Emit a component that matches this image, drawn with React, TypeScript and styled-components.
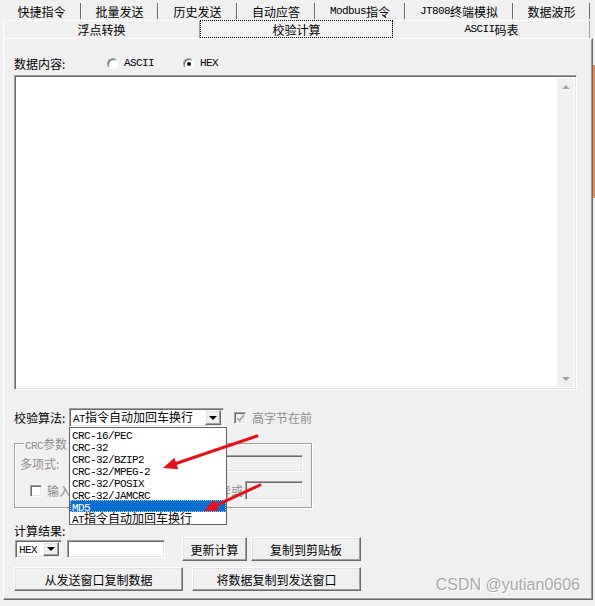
import React from 'react'
import styled, { createGlobalStyle, css } from 'styled-components'

const GlobalStyle = createGlobalStyle`
  html, body {
    margin: 0;
    padding: 0;
    background: #f0f0f0;
  }
  body {
    font-family: "Noto Sans CJK SC", "Noto Sans", sans-serif;
    font-size: 12px;
    line-height: 13px;
    color: #000;
    overflow: hidden;
  }
`

const sunken = css`
  box-sizing: border-box;
  border: 1px solid;
  border-color: #a0a0a0 #ffffff #ffffff #a0a0a0;
  box-shadow: inset 1px 1px 0 #696969, inset -1px -1px 0 #e3e3e3;
`

const raised = css`
  box-sizing: border-box;
  border: 1px solid;
  border-color: #ffffff #696969 #696969 #ffffff;
  box-shadow: inset -1px -1px 0 #a0a0a0, inset 1px 1px 0 #e3e3e3;
`

const Mono = styled.span`
  font-family: "Liberation Mono", "DejaVu Sans Mono", monospace;
  font-size: 11px;
  letter-spacing: -0.6px;
`

const Window = styled.div`
  position: relative;
  width: 595px;
  height: 606px;
  overflow: hidden;
  display: flex;
  flex-direction: column;
`

const TabRow = styled.div<{ $h: number }>`
  display: flex;
  height: ${({ $h }) => $h}px;
  padding-left: 3px;
  flex-shrink: 0;
`

const TopTab = styled.div<{ $w: number }>`
  width: ${({ $w }) => $w}px;
  height: 16px;
  margin-top: 3px;
  box-sizing: border-box;
  display: flex;
  align-items: center;
  justify-content: center;
  border-right: 1px solid #696969;
  border-left: 1px solid #ffffff;
  &:first-child {
    border-left: none;
  }
`

const SubTab = styled.div<{ $w: number; $active?: boolean }>`
  width: ${({ $w }) => $w}px;
  height: 18px;
  box-sizing: border-box;
  display: flex;
  align-items: center;
  justify-content: center;
  border-top: 1px solid #ffffff;
  border-left: 1px solid #ffffff;
  border-right: 1px solid #a0a0a0;
  ${({ $active }) =>
    $active &&
    css`
      outline: 1px dotted #000;
      outline-offset: -1px;
      background: #f3f3f3;
    `}
`

const Panel = styled.div`
  margin-left: 3px;
  width: 590px;
  height: 562px;
  box-sizing: border-box;
  border: 1px solid;
  border-color: #ffffff #696969 #696969 #ffffff;
  box-shadow: inset -1px -1px 0 #a0a0a0;
  padding: 16px 0 0 10px;
  display: flex;
  flex-direction: column;
`

const Row = styled.div<{ $h: number; $mt?: number }>`
  display: flex;
  align-items: center;
  height: ${({ $h }) => $h}px;
  margin-top: ${({ $mt = 0 }) => $mt}px;
`

const Label = styled.span<{ $w?: number; $disabled?: boolean }>`
  display: inline-block;
  white-space: nowrap;
  ${({ $w }) => $w !== undefined && `width: ${$w}px;`}
  color: ${({ $disabled }) => ($disabled ? '#8d8d8d' : '#000')};
`

const RadioItem = styled.label<{ $w: number }>`
  display: flex;
  align-items: center;
  width: ${({ $w }) => $w}px;
`

const RadioDot = styled.span<{ $checked?: boolean }>`
  position: relative;
  width: 11px;
  height: 11px;
  box-sizing: border-box;
  border-radius: 50%;
  border: 1px solid;
  border-color: #a0a0a0 #ffffff #ffffff #a0a0a0;
  box-shadow: inset 1px 1px 0 #696969;
  background: #fff;
  margin-right: 6px;
  &::after {
    content: '';
    display: ${({ $checked }) => ($checked ? 'block' : 'none')};
    position: absolute;
    left: 3px;
    top: 3px;
    width: 4px;
    height: 4px;
    border-radius: 50%;
    background: #000;
  }
`

const TextArea = styled.div`
  ${sunken};
  width: 563px;
  height: 315px;
  margin-top: 4px;
  background: #fff;
  display: flex;
  justify-content: flex-end;
  padding: 2px;
`

const ScrollBar = styled.div`
  width: 17px;
  background: #f0f0f0;
  display: flex;
  flex-direction: column;
  justify-content: space-between;
  align-items: center;
  padding: 7px 0 6px;
`

const Arrow = styled.span<{ $dir: 'up' | 'down'; $color?: string }>`
  width: 0;
  height: 0;
  border-left: 4px solid transparent;
  border-right: 4px solid transparent;
  ${({ $dir, $color = '#a3a3a3' }) =>
    $dir === 'up'
      ? `border-bottom: 4px solid ${$color};`
      : `border-top: 4px solid ${$color};`}
`

const Combo = styled.div<{ $w: number; $h: number }>`
  ${sunken};
  position: relative;
  width: ${({ $w }) => $w}px;
  height: ${({ $h }) => $h}px;
  background: #fff;
  display: flex;
  align-items: center;
  padding: 0 2px 0 3px;
`

const ComboText = styled.span`
  flex: 1;
  white-space: nowrap;
`

const DropButton = styled.span`
  ${raised};
  width: 16px;
  height: 15px;
  background: #f0f0f0;
  display: flex;
  align-items: center;
  justify-content: center;
`

const DropList = styled.ul`
  position: absolute;
  left: -1px;
  top: 18px;
  width: 158px;
  margin: 0;
  padding: 0;
  list-style: none;
  box-sizing: border-box;
  border: 1px solid #646464;
  background: #fff;
  z-index: 2;
`

const DropItem = styled.li<{ $selected?: boolean }>`
  height: 12px;
  line-height: 12px;
  padding-left: 2px;
  white-space: nowrap;
  background: ${({ $selected }) => ($selected ? '#0b6fcf' : 'transparent')};
  color: ${({ $selected }) => ($selected ? '#fff' : '#000')};
  ${({ $selected }) =>
    $selected &&
    css`
      outline: 1px dotted #9fc6f0;
      outline-offset: -1px;
    `}
`

const CheckBox = styled.span`
  ${sunken};
  width: 12px;
  height: 12px;
  background: #f0f0f0;
  display: flex;
  align-items: center;
  justify-content: center;
`

const Group = styled.fieldset`
  margin: 10px 0 0 0;
  padding: 0 8px 7px 5px;
  width: 298px;
  box-sizing: border-box;
  border: 1px solid #a0a0a0;
  box-shadow: inset 1px 1px 0 #fff, 1px 1px 0 #fff;
  min-width: 0;
`

const Legend = styled.legend`
  padding: 0 1px;
  margin-left: 4px;
  color: #8d8d8d;
  line-height: 13px;
  height: 13px;
`

const Field = styled.div<{ $w: number; $h: number; $white?: boolean }>`
  ${sunken};
  width: ${({ $w }) => $w}px;
  height: ${({ $h }) => $h}px;
  background: ${({ $white }) => ($white ? '#fff' : '#f0f0f0')};
`

const Button = styled.button<{ $w: number; $ml?: number }>`
  ${raised};
  width: ${({ $w }) => $w}px;
  height: 24px;
  margin-left: ${({ $ml = 0 }) => $ml}px;
  background: #f0f0f0;
  font-family: inherit;
  font-size: 12px;
  color: #000;
  padding: 0;
`

const Strip = styled.div`
  position: absolute;
  right: 0;
  top: 65px;
  width: 2px;
  height: 133px;
  background: #df8a5c;
`

const Marks = styled.svg`
  position: absolute;
  left: 0;
  top: 0;
  pointer-events: none;
  z-index: 5;
`

const Watermark = styled.div`
  position: absolute;
  right: 15px;
  top: 578px;
  font-family: "Liberation Sans", Arial, sans-serif;
  font-size: 16px;
  color: #a9a9a9;
  text-shadow: 1px 1px 0 #fff;
`

const topTabs: Array<{ w: number; label: React.ReactNode }> = [
  { w: 78, label: '快捷指令' },
  { w: 77, label: '批量发送' },
  { w: 79, label: '历史发送' },
  { w: 78, label: '自动应答' },
  { w: 90, label: <><Mono>Modbus</Mono>指令</> },
  { w: 108, label: <><Mono>JT808</Mono>终端模拟</> },
  { w: 77, label: '数据波形' }
]

const algos = [
  'CRC-16/PEC',
  'CRC-32',
  'CRC-32/BZIP2',
  'CRC-32/MPEG-2',
  'CRC-32/POSIX',
  'CRC-32/JAMCRC',
  'MD5'
]

const Check = () => (
  <svg width="9" height="8" viewBox="0 0 9 8">
    <path d="M1 4 L3.5 6.5 L8 1" fill="none" stroke="#a0a0a0" strokeWidth="1.6" />
  </svg>
)

const App: React.FC = () => (
  <Window>
    <GlobalStyle />
    <TabRow $h={20}>
      {topTabs.map((t, i) => (
        <TopTab key={i} $w={t.w}>
          {t.label}
        </TopTab>
      ))}
    </TabRow>
    <TabRow $h={18}>
      <SubTab $w={197}>浮点转换</SubTab>
      <SubTab $w={193} $active>
        校验计算
      </SubTab>
      <SubTab $w={197}>
        <Mono>ASCII</Mono>码表
      </SubTab>
    </TabRow>

    <Panel>
      <Row $h={16}>
        <Label $w={93}>数据内容:</Label>
        <RadioItem $w={76}>
          <RadioDot />
          <Mono>ASCII</Mono>
        </RadioItem>
        <RadioItem $w={50}>
          <RadioDot $checked />
          <Mono>HEX</Mono>
        </RadioItem>
      </Row>

      <TextArea>
        <ScrollBar>
          <Arrow $dir="up" />
          <Arrow $dir="down" />
        </ScrollBar>
      </TextArea>

      <Row $h={19} $mt={18}>
        <Label $w={55}>校验算法:</Label>
        <Combo $w={155} $h={19}>
          <ComboText>
            <Mono>AT</Mono>指令自动加回车换行
          </ComboText>
          <DropButton>
            <Arrow $dir="down" $color="#000" />
          </DropButton>
          <DropList>
            {algos.map((a) => (
              <DropItem key={a} $selected={a === 'MD5'}>
                <Mono>{a}</Mono>
              </DropItem>
            ))}
            <DropItem>
              <Mono>AT</Mono>指令自动加回车换行
            </DropItem>
          </DropList>
        </Combo>
        <span style={{ width: 10 }} />
        <CheckBox>
          <Check />
        </CheckBox>
        <Label $disabled style={{ marginLeft: 6 }}>
          高字节在前
        </Label>
      </Row>

      <Group>
        <Legend>
          <Mono>CRC</Mono>参数
        </Legend>
        <Row $h={17} $mt={5}>
          <Label $w={50} $disabled>
            多项式:
          </Label>
          <Field $w={233} $h={17} />
        </Row>
        <Row $h={19} $mt={9}>
          <CheckBox style={{ marginLeft: 10, background: '#fff' }} />
          <Label $disabled style={{ marginLeft: 5 }}>
            输入反转
          </Label>
          <Label $disabled style={{ marginLeft: 'auto', marginRight: 2 }}>
            结果异或
          </Label>
          <Field $w={58} $h={19} />
        </Row>
      </Group>

      <Row $h={13} $mt={16}>
        <Label>计算结果:</Label>
      </Row>
      <Row $h={24}>
        <Combo $w={47} $h={18} style={{ marginLeft: 1 }}>
          <ComboText>
            <Mono>HEX</Mono>
          </ComboText>
          <DropButton style={{ height: 14 }}>
            <Arrow $dir="down" $color="#000" />
          </DropButton>
        </Combo>
        <Field $w={98} $h={18} $white style={{ marginLeft: 5 }} />
        <Button $w={65} $ml={17}>
          更新计算
        </Button>
        <Button $w={110} $ml={4}>
          复制到剪贴板
        </Button>
      </Row>
      <Row $h={24} $mt={6}>
        <Button $w={169}>从发送窗口复制数据</Button>
        <Button $w={169} $ml={9}>
          将数据复制到发送窗口
        </Button>
      </Row>
    </Panel>

    <Strip />
    <Marks width="595" height="606" viewBox="0 0 595 606">
      <line x1="257" y1="436" x2="176" y2="463.5" stroke="#e8101a" strokeWidth="3" strokeLinecap="round" />
      <polygon points="163,468 178.2,469.2 174.4,457.8" fill="#e8101a" />
      <line x1="260" y1="485" x2="216.7" y2="505.1" stroke="#e8101a" strokeWidth="3" strokeLinecap="round" />
      <polygon points="204,511 219.2,510.5 214.2,499.7" fill="#e8101a" />
    </Marks>
    <Watermark>CSDN @yutian0606</Watermark>
  </Window>
)

export default App
